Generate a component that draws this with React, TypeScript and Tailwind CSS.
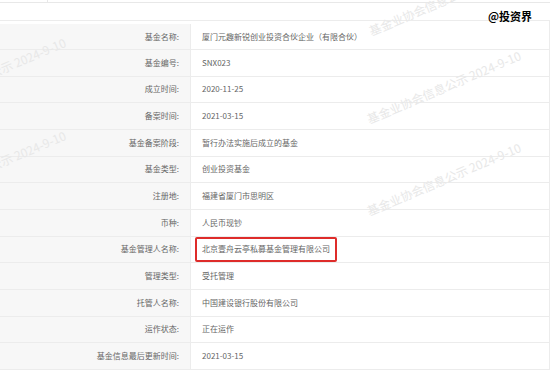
import React from "react";

const rows: { label: string; value: string; highlight?: boolean }[] = [
  { label: "基金名称:", value: "厦门元趣新锐创业投资合伙企业（有限合伙）" },
  { label: "基金编号:", value: "SNX023" },
  { label: "成立时间:", value: "2020-11-25" },
  { label: "备案时间:", value: "2021-03-15" },
  { label: "基金备案阶段:", value: "暂行办法实施后成立的基金" },
  { label: "基金类型:", value: "创业投资基金" },
  { label: "注册地:", value: "福建省厦门市思明区" },
  { label: "币种:", value: "人民币现钞" },
  { label: "基金管理人名称:", value: "北京壹舟云亭私募基金管理有限公司", highlight: true },
  { label: "管理类型:", value: "受托管理" },
  { label: "托管人名称:", value: "中国建设银行股份有限公司" },
  { label: "运作状态:", value: "正在运作" },
  { label: "基金信息最后更新时间:", value: "2021-03-15" },
];

// watermark start points (bottom-left of the text)
const marks = [
  { x: 372, y: 37 },
  { x: 370, y: 125 },
  { x: 370, y: 217 },
  { x: -85, y: 112 },
  { x: -85, y: 205 },
];

export default function App() {
  return (
    <div
      className="relative w-[553px] h-[371px] overflow-hidden bg-white text-[#666]"
      style={{ fontFamily: '"Noto Sans CJK SC", "Noto Sans", sans-serif' }}
    >
      {/* previous block edge */}
      <div className="flex h-[3px] w-[550px] border-b border-[#e8e8e8]">
        <div className="w-[48px] border-r border-[#e8e8e8]" />
      </div>

      <div className="mt-[17px] w-[550px] border-r border-t border-[#ececec]">
        {rows.map((r, i) => (
          <div
            key={r.label}
            className={`flex border-b border-[#ececec] ${i === 0 ? "h-[29px] pt-[3px]" : "h-[26.67px]"}`}
          >
            <div className="flex w-[191px] shrink-0 items-center justify-end border-r border-[#ececec] bg-[#f7f7f7] pr-[11px] text-[8px] leading-none">
              {r.label}
            </div>
            <div className="flex flex-1 items-center pl-[5px]">
              {r.highlight ? (
                <div className="-ml-px flex h-[25px] items-center rounded-[2px] border-2 border-[#de2c2a] px-[5px] text-[8px] leading-none">
                  {r.value}
                </div>
              ) : (
                <span className="pl-[6px] text-[8px] leading-none">{r.value}</span>
              )}
            </div>
          </div>
        ))}
      </div>

      {marks.map((m, i) => (
        <span
          key={i}
          className="pointer-events-none absolute whitespace-nowrap text-[12px] leading-none text-[#e8e8e8]"
          style={{
            left: m.x,
            top: m.y - 12,
            transform: "rotate(-23deg)",
            transformOrigin: "left bottom",
          }}
        >
          基金业协会信息公示 2024-9-10
        </span>
      ))}

      <span className="absolute left-[488px] top-[11px] text-[11px] font-semibold leading-none text-black">
        @投资界
      </span>
    </div>
  );
}
